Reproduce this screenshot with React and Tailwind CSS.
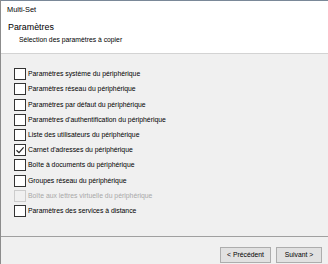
import React from "react";

const items = [
  { label: "Paramètres système du périphérique" },
  { label: "Paramètres réseau du périphérique" },
  { label: "Paramètres par défaut du périphérique" },
  { label: "Paramètres d'authentification du périphérique" },
  { label: "Liste des utilisateurs du périphérique" },
  { label: "Carnet d'adresses du périphérique", checked: true },
  { label: "Boîte à documents du périphérique" },
  { label: "Groupes réseau du périphérique" },
  { label: "Boîte aux lettres virtuelle du périphérique", disabled: true },
  { label: "Paramètres des services à distance" },
];

function Box({ checked, disabled }) {
  return (
    <div
      className={
        "w-[12px] h-[12px] border flex items-center justify-center shrink-0 " +
        (disabled ? "border-[#cccccc] bg-[#f0f0f0]" : "border-[#333333] bg-white")
      }
    >
      {checked && (
        <svg width="10" height="10" viewBox="0 0 10 10">
          <path d="M1.5 5.2 L4 7.6 L8.6 2.4" fill="none" stroke="#222" strokeWidth="1.2" />
        </svg>
      )}
    </div>
  );
}

export default function App() {
  return (
    <div
      className="w-[328px] h-[264px] bg-[#f0f0f0] flex flex-col overflow-hidden border-l border-[#8c8c8c] text-[#000]"
      style={{ fontFamily: '"Liberation Sans", Arial, sans-serif' }}
    >
      <div className="h-[19px] shrink-0 bg-white border-t border-[#7a8898] flex items-center pl-[6px] text-[7.4px]">
        Multi-Set
      </div>
      <div className="h-[35px] shrink-0 bg-white border-b border-[#d3d3d3] flex flex-col">
        <div className="pl-[7px] pt-[2px] h-[12px] leading-[12px] text-[8.9px]">Paramètres</div>
        <div className="pl-[18px] pt-[4px] leading-[10px] text-[6.8px]">Sélection des paramètres à copier</div>
      </div>
      <div className="flex-1 flex flex-col pt-[12.5px] pl-[13px]">
        {items.map((it) => (
          <div key={it.label} className="h-[15.22px] flex items-center gap-[2px]">
            <Box checked={it.checked} disabled={it.disabled} />
            <span
              className={"text-[6.85px] leading-[10px] " + (it.disabled ? "text-[#a8a8a8]" : "text-black")}
            >
              {it.label}
            </span>
          </div>
        ))}
      </div>
      <div className="h-[28px] shrink-0 border-t border-[#a0a0a0] flex items-start justify-end pt-[10px] pr-[6px] gap-[5px]">
        <button className="w-[51px] h-[16px] bg-[#e1e1e1] border border-[#adadad] text-[6.8px] flex items-center justify-center">
          &lt; Précédent
        </button>
        <button className="w-[46px] h-[16px] bg-[#e1e1e1] border border-[#adadad] text-[6.8px] flex items-center justify-center">
          Suivant &gt;
        </button>
      </div>
    </div>
  );
}
